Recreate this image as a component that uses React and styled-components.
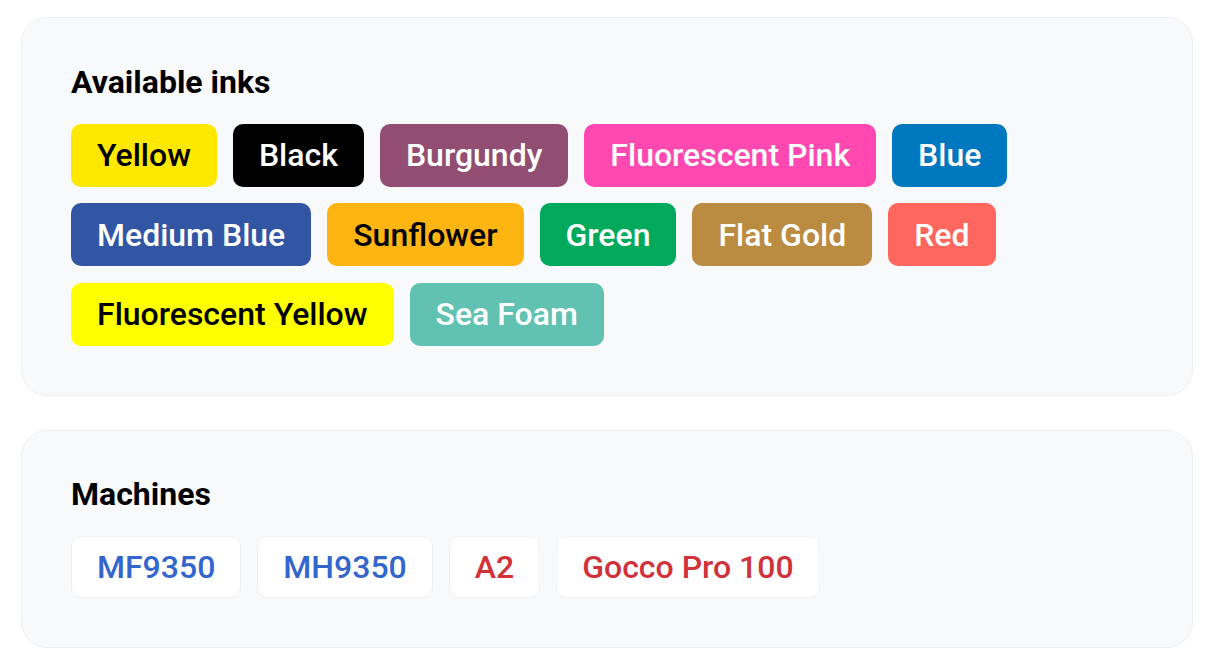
import React from 'react';
import styled, { createGlobalStyle } from 'styled-components';

const inks = [
  { name: 'Yellow', bg: '#ffe800', fg: '#000' },
  { name: 'Black', bg: '#000000', fg: '#fff' },
  { name: 'Burgundy', bg: '#914e72', fg: '#fff' },
  { name: 'Fluorescent Pink', bg: '#ff48b0', fg: '#fff' },
  { name: 'Blue', bg: '#0078bf', fg: '#fff' },
  { name: 'Medium Blue', bg: '#3255a4', fg: '#fff' },
  { name: 'Sunflower', bg: '#ffb511', fg: '#000' },
  { name: 'Green', bg: '#00a95c', fg: '#fff' },
  { name: 'Flat Gold', bg: '#bb8b41', fg: '#fff' },
  { name: 'Red', bg: '#ff665e', fg: '#fff' },
  { name: 'Fluorescent Yellow', bg: '#ffff00', fg: '#000' },
  { name: 'Sea Foam', bg: '#62c2b1', fg: '#fff' },
];

const machines = [
  { name: 'MF9350', color: '#3366cc' },
  { name: 'MH9350', color: '#3366cc' },
  { name: 'A2', color: '#d1323a' },
  { name: 'Gocco Pro 100', color: '#d1323a' },
];

const App = () => {
  return (
    <>
      <GlobalStyle />
      <Page>
        <Card>
          <CardTitle>Available inks</CardTitle>
          <ChipList>
            {inks.map((ink) => (
              <InkChip key={ink.name} $bg={ink.bg} $fg={ink.fg}>
                {ink.name}
              </InkChip>
            ))}
          </ChipList>
        </Card>
        <Card>
          <CardTitle>Machines</CardTitle>
          <ChipList>
            {machines.map((m) => (
              <MachineChip key={m.name} $color={m.color}>
                {m.name}
              </MachineChip>
            ))}
          </ChipList>
        </Card>
      </Page>
    </>
  );
};

const GlobalStyle = createGlobalStyle`
  body {
    margin: 0;
    background: #fff;
    font-family: Roboto, "Liberation Sans", sans-serif;
  }
`

const Page = styled.div`
  display: flex;
  flex-direction: column;
  gap: 34px;
  padding: 17px 25px 20px 21px;
`

const Card = styled.section`
  background: #f8f9fb;
  border: 1.5px solid #eeeff1;
  border-radius: 26px;
  padding: 45.5px 50px 49px 49px;
`

const CardTitle = styled.h2`
  margin: 0 0 22.5px;
  font-size: 32px;
  font-weight: 700;
  color: #000;
  line-height: 37.5px;
`

const ChipList = styled.div`
  display: flex;
  flex-wrap: wrap;
  gap: 16.5px 16px;
`

const InkChip = styled.span`
  display: inline-flex;
  align-items: center;
  height: 63px;
  box-sizing: border-box;
  padding: 0 26px;
  border-radius: 10px;
  background: ${(p) => p.$bg};
  color: ${(p) => p.$fg};
  font-size: 32px;
  font-weight: 500;
`

const MachineChip = styled.span`
  display: inline-flex;
  align-items: center;
  height: 62px;
  box-sizing: border-box;
  padding: 0 25px;
  border-radius: 10px;
  background: #fff;
  border: 1.5px solid #eff0f2;
  color: ${(p) => p.$color};
  font-size: 32px;
  font-weight: 500;
`

export default App;
